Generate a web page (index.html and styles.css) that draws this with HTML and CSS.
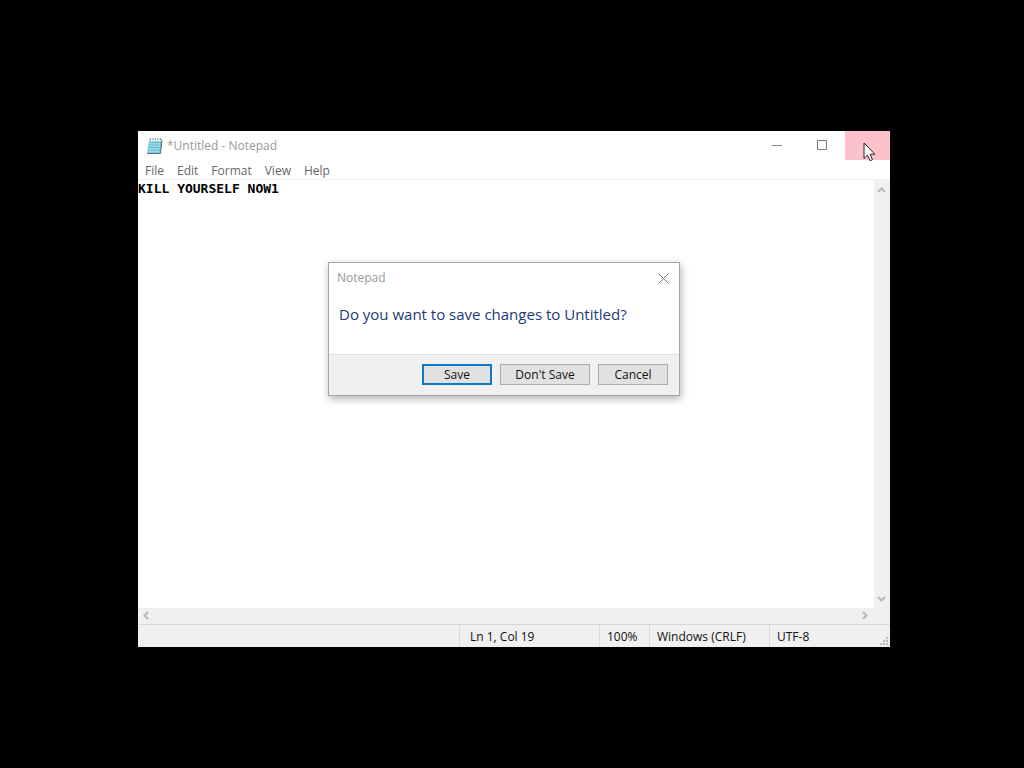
FILE: index.html
```html
<!DOCTYPE html>
<html lang="en">
<head>
<meta charset="utf-8">
<title>*Untitled - Notepad</title>
<link rel="stylesheet" href="styles.css">
</head>
<body>
<main class="desktop">
  <section class="window" aria-label="Notepad">
    <header class="titlebar">
      <svg class="app-icon" width="18" height="18" viewBox="0 0 18 18" aria-hidden="true">
        <path d="M3.500 2h12.500l-1.500 14.500H1z" fill="#6fb9cf"/>
        <path d="M3.500 2h11l-1.500 13.500H1.200z" fill="#9adbe9"/>
        <path d="M3.200 5.500h10.500M2.800 8h10.500M2.400 10.500h10.500M2 13h10.500" stroke="#6cb8d0" stroke-width="1"/>
        <path d="M16 2.500l-1.500 14H1" fill="none" stroke="#54707c" stroke-width="1"/>
        <path d="M3.500 3h12" stroke="#e8f4f6" stroke-width="2"/>
        <path d="M4.500 1v2M7 1v2M9.500 1v2M12 1v2M14.500 1v2" stroke="#7d9298" stroke-width="1"/>
      </svg>
      <h1 class="title">*Untitled - Notepad</h1>
      <button class="caption-button" aria-label="Minimize">
        <svg width="11" height="11" viewBox="0 0 11 11"><path d="M0 5.500h10" stroke="#888"/></svg>
      </button>
      <button class="caption-button" aria-label="Maximize">
        <svg width="11" height="11" viewBox="0 0 11 11"><path d="M.5 .5h9v9H.5z" fill="none" stroke="#777"/></svg>
      </button>
      <button class="caption-button close" aria-label="Close"></button>
    </header>
    <nav class="menubar">
      <button class="menu">File</button>
      <button class="menu">Edit</button>
      <button class="menu">Format</button>
      <button class="menu">View</button>
      <button class="menu">Help</button>
    </nav>
    <div class="workspace">
      <textarea class="editor" aria-label="Text editor" spellcheck="false">KILL YOURSELF NOW1</textarea>
      <div class="scrollbar vertical">
        <svg width="9" height="6" viewBox="0 0 9 6"><path d="M1 5l3.500-3.500L8 5" fill="none" stroke="#b8b8b8" stroke-width="2"/></svg>
        <svg width="9" height="6" viewBox="0 0 9 6"><path d="M1 1l3.500 3.500L8 1" fill="none" stroke="#b8b8b8" stroke-width="2"/></svg>
      </div>
      <div class="scrollbar horizontal">
        <svg width="6" height="9" viewBox="0 0 6 9"><path d="M5 1L1.500 4.500L5 8" fill="none" stroke="#b8b8b8" stroke-width="2"/></svg>
        <svg width="6" height="9" viewBox="0 0 6 9"><path d="M1 1l3.500 3.500L1 8" fill="none" stroke="#b8b8b8" stroke-width="2"/></svg>
      </div>
    </div>
    <footer class="statusbar">
      <span class="cell spacer"></span>
      <span class="cell position">Ln 1, Col 19</span>
      <span class="cell zoom">100%</span>
      <span class="cell endings">Windows (CRLF)</span>
      <span class="cell encoding">UTF-8</span>
      <svg class="grip" width="9" height="9" viewBox="0 0 9 9" aria-hidden="true"><path d="M6 0h2v2H6zM3 3h2v2H3zM6 3h2v2H6zM0 6h2v2H0zM3 6h2v2H3zM6 6h2v2H6z" fill="#bdbdbd"/></svg>
    </footer>
  </section>

  <section class="dialog" role="dialog" aria-labelledby="question">
    <header class="dialog-title">
      <span>Notepad</span>
      <button class="dialog-close" aria-label="Close dialog">
        <svg width="11" height="11" viewBox="0 0 11 11"><path d="M.5 .5l10 10M10.500 .5l-10 10" stroke="#777"/></svg>
      </button>
    </header>
    <p class="question" id="question">Do you want to save changes to Untitled?</p>
    <div class="actions">
      <button class="action primary">Save</button>
      <button class="action wide">Don't Save</button>
      <button class="action">Cancel</button>
    </div>
  </section>

  <svg class="cursor" width="13" height="20" viewBox="0 0 13 20" aria-hidden="true">
    <path d="M1 1v15.500l3.500-3.400L7 18.700l2.500-1L7.100 12.200h4.800z" fill="#fff" stroke="#222"/>
  </svg>
</main>
</body>
</html>
```
FILE: styles.css
```css
* {
  box-sizing: border-box;
}

body {
  margin: 0;
  background: #000;
  color: #111;
  font: 12px/16px "Open Sans", "Noto Sans", sans-serif;
}

button {
  margin: 0;
  padding: 0;
  border: 0;
  background: none;
  color: inherit;
  font: inherit;
}

svg {
  display: block;
  flex: none;
}

.desktop {
  position: relative;
  min-height: 100vh;
  overflow: hidden;
}

.window {
  position: absolute;
  inset: 131px 134px 121px 138px;
  display: flex;
  flex-direction: column;
  background: #fff;
}

.titlebar {
  display: flex;
  align-items: center;
  height: 29px;
  padding-left: 8px;
}

.title {
  flex: 1;
  margin: 0 0 0 3px;
  color: #999;
  font-size: 12px;
  font-weight: 400;
}

.caption-button {
  display: grid;
  place-items: center;
  width: 45px;
  height: 29px;
}

.close {
  background: #fbc3c9;
}

.menubar {
  display: flex;
  gap: 13px;
  height: 20px;
  padding: 2px 7px 0;
  border-bottom: 1px solid #f0f0f0;
  color: #666;
}

.workspace {
  flex: 1;
  display: grid;
  grid-template: 1fr 16px / 1fr 16px;
  background: #f0f0f0;
}

.editor {
  width: 100%;
  height: 100%;
  padding: 1px 0 0;
  border: 0;
  outline: 0;
  resize: none;
  background: #fff;
  color: #000;
  font: bold 13px/16px "DejaVu Sans Mono", "Liberation Mono", monospace;
}

.scrollbar {
  display: flex;
  align-items: center;
  justify-content: space-between;
}

.vertical {
  flex-direction: column;
  padding: 7px 1px 6px 0;
}

.horizontal {
  padding: 0 6px 1px 5px;
}

.statusbar {
  position: relative;
  display: flex;
  height: 23px;
  border-top: 1px solid #d7d7d7;
  background: #f0f0f0;
}

.cell {
  padding: 4px 0 0 7px;
  border-left: 1px solid #d9d9d9;
}

.spacer {
  flex: 1;
  border-left: 0;
}

.position {
  width: 140px;
  padding-left: 10px;
}

.zoom {
  width: 50px;
}

.endings {
  width: 120px;
}

.encoding {
  width: 121px;
}

.grip {
  position: absolute;
  right: 1px;
  bottom: 1px;
}

.dialog {
  position: absolute;
  top: 262px;
  left: calc(50% - 184px);
  width: 352px;
  border: 1px solid #a5a5a5;
  background: #fff;
  box-shadow: 1px 3px 8px rgba(0, 0, 0, 0.3);
}

.dialog-title {
  display: flex;
  align-items: center;
  justify-content: space-between;
  height: 30px;
  padding: 0 10px 0 8px;
  color: #999;
}

.question {
  margin: 0;
  padding: 10px 10px 29px;
  color: #1b3a7a;
  font-size: 15px;
  line-height: 22px;
}

.actions {
  display: flex;
  justify-content: flex-end;
  gap: 8px;
  padding: 9px 11px 10px;
  border-top: 1px solid #dfdfdf;
  background: #f0f0f0;
}

.action {
  width: 70px;
  height: 21px;
  border: 1px solid #adadad;
  background: #e1e1e1;
  line-height: 19px;
}

.wide {
  width: 90px;
}

.primary {
  border: 2px solid #0f78c8;
  line-height: 17px;
}

.cursor {
  position: absolute;
  top: 142px;
  right: 148px;
}
```
